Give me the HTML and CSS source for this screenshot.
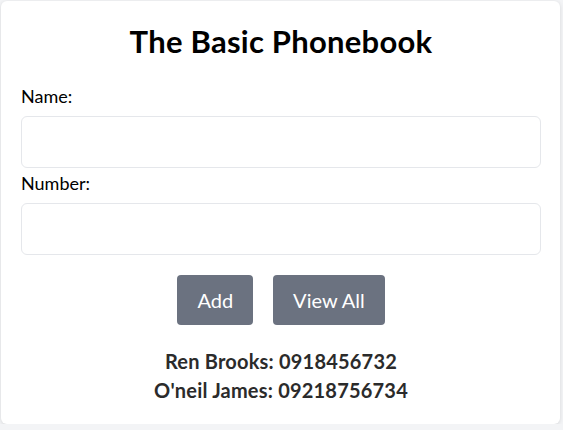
FILE: index.html
```html
<!DOCTYPE html>
<html lang="en">
<head>
<meta charset="utf-8">
<title>The Basic Phonebook</title>
<link rel="stylesheet" href="styles.css">
</head>
<body>
<main class="card">
  <h1 class="title">The Basic Phonebook</h1>
  <form class="form">
    <label class="label" for="name">Name:</label>
    <input class="input" id="name" type="text">
    <label class="label label-next" for="number">Number:</label>
    <input class="input" id="number" type="text">
    <div class="actions">
      <button class="btn" type="button">Add</button>
      <button class="btn" type="button">View All</button>
    </div>
  </form>
  <ul class="list">
    <li class="entry">Ren Brooks: 0918456732</li>
    <li class="entry">O'neil James: 09218756734</li>
  </ul>
</main>
</body>
</html>
```
FILE: styles.css
```css
* { box-sizing: border-box; }
html, body { margin: 0; }
body {
  background: #f3f4f6;
  padding: 1px 0 0 1px;
  font-family: Lato, "Noto Sans", sans-serif;
  color: #000;
}
.card {
  width: 559px;
  height: 423px;
  background: #fff;
  border-radius: 6px;
  box-shadow: 0 1px 4px rgba(0,0,0,0.12);
  padding: 20px 19px 0 20px;
}
.title {
  margin: 0 0 21px;
  font-size: 31px;
  line-height: 40px;
  font-weight: 700;
  letter-spacing: 0.25px;
  text-align: center;
}
.form { display: flex; flex-direction: column; }
.label {
  font-size: 18px;
  line-height: 28px;
  margin-bottom: 6px;
}
.label-next { margin-top: 1px; }
.input {
  height: 52px;
  width: 520px;
  border: 1px solid #e5e7eb;
  border-radius: 6px;
  margin: 0;
  font: inherit;
}
.actions {
  display: flex;
  justify-content: center;
  gap: 20px;
  margin-top: 20px;
}
.btn {
  background: #6b7280;
  color: #fff;
  border: 0;
  border-radius: 4px;
  height: 50px;
  padding: 0 20px;
  font-family: inherit;
  font-size: 20px;
}
.list {
  list-style: none;
  margin: 22px 0 0;
  padding: 0;
  text-align: center;
}
.entry {
  font-size: 20px;
  line-height: 29px;
  font-weight: 700;
  letter-spacing: 0.2px;
  color: #2b2b2b;
}
```
